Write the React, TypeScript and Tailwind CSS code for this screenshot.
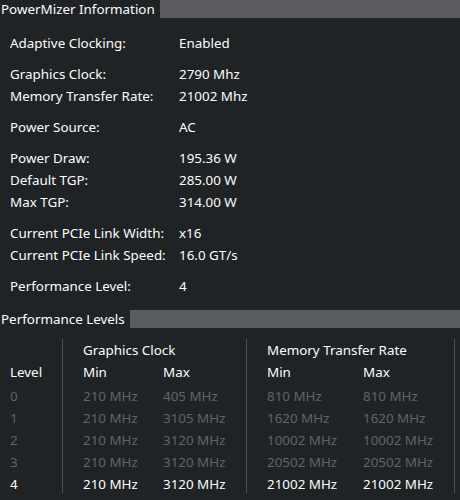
import React from 'react'

const INFO: [string, string][][] = [
  [['Adaptive Clocking:', 'Enabled']],
  [
    ['Graphics Clock:', '2790 Mhz'],
    ['Memory Transfer Rate:', '21002 Mhz'],
  ],
  [['Power Source:', 'AC']],
  [
    ['Power Draw:', '195.36 W'],
    ['Default TGP:', '285.00 W'],
    ['Max TGP:', '314.00 W'],
  ],
  [
    ['Current PCIe Link Width:', 'x16'],
    ['Current PCIe Link Speed:', '16.0 GT/s'],
  ],
  [['Performance Level:', '4']],
]

const LEVELS = [
  { gMin: '210 MHz', gMax: '405 MHz', mMin: '810 MHz', mMax: '810 MHz' },
  { gMin: '210 MHz', gMax: '3105 MHz', mMin: '1620 MHz', mMax: '1620 MHz' },
  { gMin: '210 MHz', gMax: '3120 MHz', mMin: '10002 MHz', mMax: '10002 MHz' },
  { gMin: '210 MHz', gMax: '3120 MHz', mMin: '20502 MHz', mMax: '20502 MHz' },
  { gMin: '210 MHz', gMax: '3120 MHz', mMin: '21002 MHz', mMax: '21002 MHz' },
]

const CURRENT = 4

function SectionHeader({ title }: { title: string }) {
  return (
    <div className="flex h-[18px] items-stretch">
      <span className="pl-[1px] leading-[18px] whitespace-nowrap">{title}</span>
      <div className="ml-[5px] flex-1 bg-[#5b5c5f]" />
    </div>
  )
}

function rowColor(i: number) {
  return i === CURRENT ? 'text-[#fcfcfc]' : 'text-[#616467]'
}

export default function App() {
  return (
    <div
      className="h-[500px] w-[460px] overflow-hidden bg-[#202326] text-[13.4px] text-[#fcfcfc]"
      style={{ fontFamily: '"Noto Sans", "DejaVu Sans", sans-serif' }}
    >
      <SectionHeader title="PowerMizer Information" />

      {/* Info rows */}
      <div className="flex flex-col gap-[9px] pl-[10px] pt-[14px]">
        {INFO.map((group, gi) => (
          <div key={gi} className="flex flex-col">
            {group.map(([label, value]) => (
              <div key={label} className="flex h-[22px] items-center leading-[22px]">
                <span className="w-[169px]">{label}</span>
                <span>{value}</span>
              </div>
            ))}
          </div>
        ))}
      </div>

      <div className="mt-[13px]">
        <SectionHeader title="Performance Levels" />
      </div>

      {/* Levels table */}
      <div className="mt-[11px] flex h-[154px] leading-[22px]">
        <div className="w-[62px] pl-[10px]">
          <div className="h-[22px]" />
          <div className="h-[22px]">Level</div>
          <div className="mt-[2px]">
            {LEVELS.map((_, i) => (
              <div key={i} className={`h-[22px] ${rowColor(i)}`}>
                {i}
              </div>
            ))}
          </div>
        </div>

        <div className="w-[184px] border-l border-[#4e5053] pl-[20px]">
          <div className="h-[22px]">Graphics Clock</div>
          <div className="flex h-[22px]">
            <span className="w-[80px]">Min</span>
            <span>Max</span>
          </div>
          <div className="mt-[2px]">
            {LEVELS.map((l, i) => (
              <div key={i} className={`flex h-[22px] ${rowColor(i)}`}>
                <span className="w-[80px]">{l.gMin}</span>
                <span>{l.gMax}</span>
              </div>
            ))}
          </div>
        </div>

        <div className="w-[208px] border-l border-[#4e5053] pl-[20px]">
          <div className="h-[22px]">Memory Transfer Rate</div>
          <div className="flex h-[22px]">
            <span className="w-[96px]">Min</span>
            <span>Max</span>
          </div>
          <div className="mt-[2px]">
            {LEVELS.map((l, i) => (
              <div key={i} className={`flex h-[22px] ${rowColor(i)}`}>
                <span className="w-[96px]">{l.mMin}</span>
                <span>{l.mMax}</span>
              </div>
            ))}
          </div>
        </div>

        <div className="flex-1 border-l border-[#4e5053]" />
      </div>
    </div>
  )
}
